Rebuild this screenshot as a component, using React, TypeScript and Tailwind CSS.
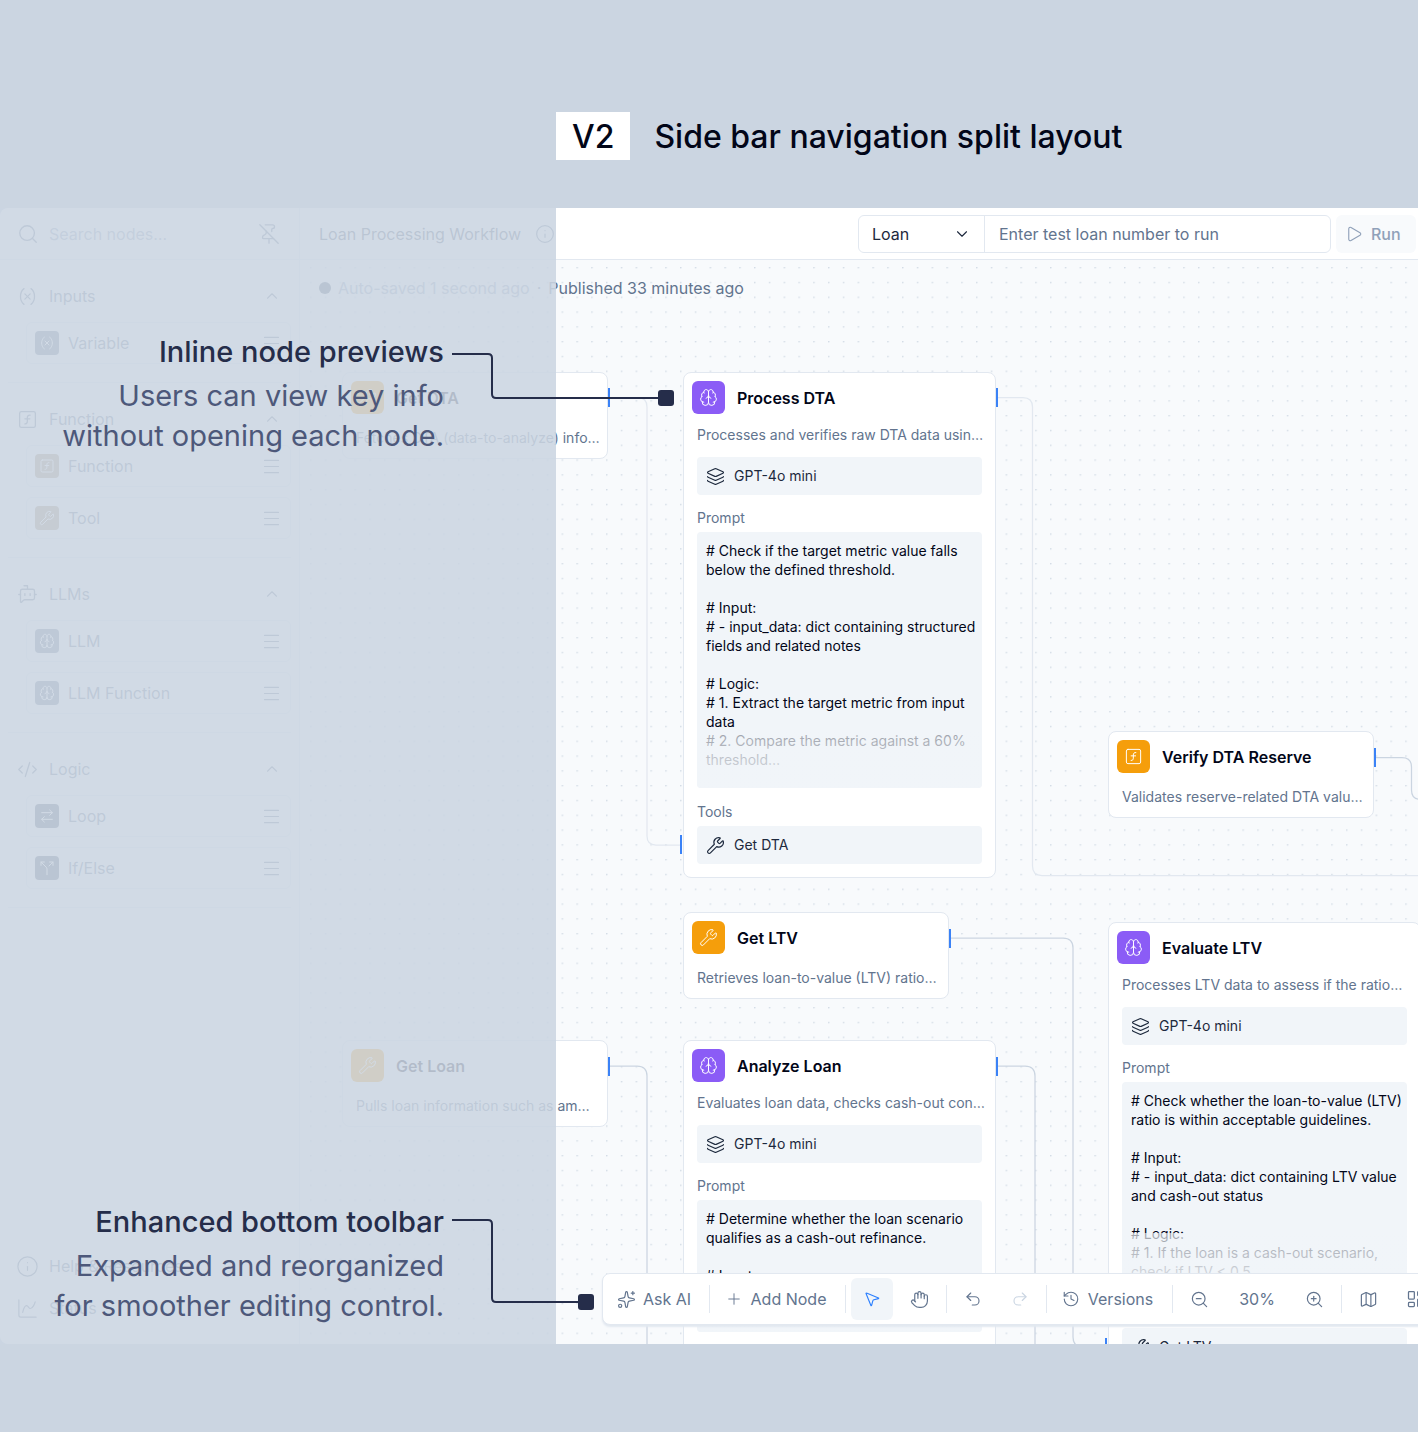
import type { ReactNode } from "react";
import {
  ArrowRightLeft,
  BotMessageSquare,
  Brain,
  ChartSpline,
  ChevronDown,
  ChevronUp,
  CodeXml,
  Hand,
  History,
  Info,
  Layers,
  LayoutDashboard,
  Map as MapIcon,
  Menu,
  MousePointer2,
  PinOff,
  Play,
  Plus,
  Redo2,
  Search,
  Sparkles,
  Split,
  SquareFunction,
  Undo2,
  Variable,
  Wrench,
  ZoomIn,
  ZoomOut,
  type LucideIcon,
} from "lucide-react";
import { clsx } from "clsx";

interface PaletteItem {
  label: string;
  icon: LucideIcon;
  color: string;
}

interface PaletteSection {
  title: string;
  icon: LucideIcon;
  items: PaletteItem[];
}

interface FlowNode {
  id: string;
  title: string;
  description: string;
  kind: "llm" | "tool" | "function";
  place: string;
  prompt?: string;
  promptHeight?: string;
  tool?: string;
}

const SECTIONS: PaletteSection[] = [
  {
    title: "Inputs",
    icon: Variable,
    items: [{ label: "Variable", icon: Variable, color: "bg-slate-500" }],
  },
  {
    title: "Function",
    icon: SquareFunction,
    items: [
      { label: "Function", icon: SquareFunction, color: "bg-[#a08a6c]" },
      { label: "Tool", icon: Wrench, color: "bg-[#a08a6c]" },
    ],
  },
  {
    title: "LLMs",
    icon: BotMessageSquare,
    items: [
      { label: "LLM", icon: Brain, color: "bg-slate-500" },
      { label: "LLM Function", icon: Brain, color: "bg-slate-500" },
    ],
  },
  {
    title: "Logic",
    icon: CodeXml,
    items: [
      { label: "Loop", icon: ArrowRightLeft, color: "bg-slate-600" },
      { label: "If/Else", icon: Split, color: "bg-slate-600" },
    ],
  },
];

const NODES: FlowNode[] = [
  {
    id: "get-dta",
    title: "Get DTA",
    description: "Fetches DTA (data-to-analyze) info…",
    kind: "tool",
    place: "left-[42px] top-[112px] w-[266px]",
  },
  {
    id: "process-dta",
    title: "Process DTA",
    description: "Processes and verifies raw DTA data usin…",
    kind: "llm",
    place: "left-[383px] top-[112px] w-[313px]",
    prompt: `# Check if the target metric value falls
below the defined threshold.

# Input:
# - input_data: dict containing structured
fields and related notes

# Logic:
# 1. Extract the target metric from input
data
# 2. Compare the metric against a 60%
threshold…`,
    promptHeight: "h-[256px]",
    tool: "Get DTA",
  },
  {
    id: "verify-dta",
    title: "Verify DTA Reserve",
    description: "Validates reserve-related DTA valu…",
    kind: "function",
    place: "left-[808px] top-[471px] w-[266px]",
  },
  {
    id: "get-ltv",
    title: "Get LTV",
    description: "Retrieves loan-to-value (LTV) ratio…",
    kind: "tool",
    place: "left-[383px] top-[652px] w-[266px]",
  },
  {
    id: "evaluate-ltv",
    title: "Evaluate LTV",
    description: "Processes LTV data to assess if the ratio…",
    kind: "llm",
    place: "left-[808px] top-[662px] w-[313px]",
    prompt: `# Check whether the loan-to-value (LTV)
ratio is within acceptable guidelines.

# Input:
# - input_data: dict containing LTV value
and cash-out status

# Logic:
# 1. If the loan is a cash-out scenario,
check if LTV < 0.5`,
    promptHeight: "h-[208px]",
    tool: "Get LTV",
  },
  {
    id: "get-loan",
    title: "Get Loan",
    description: "Pulls loan information such as am…",
    kind: "tool",
    place: "left-[42px] top-[780px] w-[266px]",
  },
  {
    id: "analyze-loan",
    title: "Analyze Loan",
    description: "Evaluates loan data, checks cash-out con…",
    kind: "llm",
    place: "left-[383px] top-[780px] w-[313px]",
    prompt: `# Determine whether the loan scenario
qualifies as a cash-out refinance.

# Input:`,
    promptHeight: "h-[132px]",
    tool: "Get Loan",
  },
];

const KIND_STYLE = {
  llm: { icon: Brain, color: "bg-[#8b5cf6]" },
  tool: { icon: Wrench, color: "bg-[#f59e0b]" },
  function: { icon: SquareFunction, color: "bg-[#f59e0b]" },
};

// Connection points, x/y of the top left corner on the canvas
const PORTS = [
  [308, 128],
  [696, 128],
  [380, 575],
  [649, 669],
  [308, 797],
  [696, 797],
  [1074, 488],
  [805, 1078],
];

function PaletteGroup({ section }: { section: PaletteSection }) {
  const Icon = section.icon;
  return (
    <section className="mr-2 ml-2 border-b border-slate-200 pt-4 pb-[18px]">
      <button className="flex h-10 w-full items-center gap-[11px] pr-2.5 pl-[9px] text-left text-slate-500">
        <Icon size={21} strokeWidth={1.5} />
        <span className="flex-1">{section.title}</span>
        <ChevronUp size={18} strokeWidth={1.5} />
      </button>
      <ul className="mt-1.5 flex flex-col gap-2.5 pl-[18px]">
        {section.items.map((item) => (
          <li
            key={item.label}
            className="flex h-[42px] items-center gap-[9px] rounded-md border border-slate-200 pr-2 pl-2"
          >
            <span className={clsx("flex size-6 items-center justify-center rounded text-white", item.color)}>
              <item.icon size={16} strokeWidth={1.5} />
            </span>
            <span className="flex-1 text-slate-500">{item.label}</span>
            <Menu size={21} strokeWidth={1.25} className="text-slate-500" />
          </li>
        ))}
      </ul>
    </section>
  );
}

function Sidebar() {
  return (
    <aside className="flex w-[300px] shrink-0 flex-col border-r border-slate-200 bg-white text-base">
      <label className="flex h-[52px] items-center gap-2.5 border-b border-slate-200 pr-[19px] pl-[17px] text-slate-400">
        <Search size={22} strokeWidth={1.5} className="shrink-0 text-slate-500" />
        <input
          type="text"
          aria-label="Search nodes"
          placeholder="Search nodes…"
          className="min-w-0 flex-1 outline-none placeholder:text-slate-400"
        />
        <PinOff size={22} strokeWidth={1.5} className="shrink-0 text-slate-500" />
      </label>
      {SECTIONS.map((section) => (
        <PaletteGroup key={section.title} section={section} />
      ))}
      <nav className="mt-auto flex flex-col pb-[15px] pl-4 text-slate-500">
        <a href="#help" className="flex h-[42px] items-center gap-2.5">
          <Info size={23} strokeWidth={1.25} />
          Help &amp; Resources
        </a>
        <a href="#status" className="flex h-[42px] items-center gap-2.5">
          <ChartSpline size={23} strokeWidth={1.25} />
          Status
        </a>
      </nav>
    </aside>
  );
}

function Topbar() {
  return (
    <header className="flex h-[52px] shrink-0 items-center border-b border-slate-200 bg-white pr-0.5 pl-[19px] text-base">
      <h2 className="text-slate-600">Loan Processing Workflow</h2>
      <Info size={20} strokeWidth={1.5} className="ml-3.5 text-slate-500" />
      <div className="ml-auto flex h-[38px] w-[473px] rounded-md border border-slate-200">
        <div className="relative w-[126px] border-r border-slate-200">
          <select
            aria-label="Record type"
            className="h-full w-full appearance-none pl-[13px] text-slate-800 outline-none"
          >
            <option>Loan</option>
          </select>
          <ChevronDown
            size={18}
            strokeWidth={1.5}
            className="pointer-events-none absolute top-[9px] right-[13px] text-slate-800"
          />
        </div>
        <input
          type="text"
          aria-label="Test loan number"
          placeholder="Enter test loan number to run"
          className="min-w-0 flex-1 px-3.5 outline-none placeholder:text-slate-500"
        />
      </div>
      <button className="ml-[5px] flex h-[38px] w-20 items-center gap-2 rounded-md bg-slate-50 pl-[9px] font-medium text-slate-400">
        <Play size={18} strokeWidth={1.5} />
        Run
      </button>
    </header>
  );
}

function InfoRow({ icon: Icon, children }: { icon: LucideIcon; children: ReactNode }) {
  return (
    <div className="flex h-[38px] items-center gap-[9px] rounded bg-slate-100 pl-[9px] text-slate-800">
      <Icon size={19} strokeWidth={1.5} />
      {children}
    </div>
  );
}

function NodeCard({ node }: { node: FlowNode }) {
  const { icon: Icon, color } = KIND_STYLE[node.kind];
  const expanded = node.prompt !== undefined;

  return (
    <article
      className={clsx(
        "absolute rounded-lg border border-slate-200 bg-white text-sm leading-5 whitespace-nowrap",
        node.place
      )}
    >
      <header className="flex items-center gap-3 pt-2 pl-2">
        <span className={clsx("flex size-[33px] items-center justify-center rounded-md text-white", color)}>
          <Icon size={19} strokeWidth={1.25} />
        </span>
        <h3 className="text-base font-semibold text-slate-950">{node.title}</h3>
      </header>
      <div className={clsx("px-[13px]", expanded ? "pt-[11px] pb-[13px]" : "pt-3.5 pb-2.5")}>
        <p className="text-slate-500">{node.description}</p>
        {expanded && (
          <>
            <div className="mt-3">
              <InfoRow icon={Layers}>GPT-4o mini</InfoRow>
            </div>
            <h4 className="mt-[13px] text-slate-500">Prompt</h4>
            <div
              className={clsx(
                "relative mt-1 overflow-hidden rounded bg-slate-100 px-[9px] pt-[9px] leading-[19px] whitespace-pre text-slate-950",
                node.promptHeight
              )}
            >
              {node.prompt}
              {/* Fades out the end of a long prompt */}
              <div className="absolute inset-x-0 bottom-0 h-[57px] bg-linear-to-b from-slate-100/65 to-slate-100/95" />
            </div>
            <h4 className="mt-3.5 text-slate-500">Tools</h4>
            <div className="mt-1">
              <InfoRow icon={Wrench}>{node.tool}</InfoRow>
            </div>
          </>
        )}
      </div>
    </article>
  );
}

function Edges() {
  return (
    <svg className="absolute inset-0 h-full w-full" fill="none" aria-hidden="true">
      <defs>
        <pattern id="dots" x="10" y="7" width="14.8" height="14.8" patternUnits="userSpaceOnUse">
          <circle cx="0.8" cy="0.8" r="0.8" fill="#cbd5e1" />
        </pattern>
      </defs>
      <rect width="100%" height="100%" fill="url(#dots)" />
      <g stroke="#e2e8f0" strokeWidth="1.25">
        <path d="M310 137.500H338Q347 137.500 347 147V576Q347 585 356 585H380" />
        <path d="M698 137.500H723Q732.500 137.500 732.500 147V606Q732.500 615.500 742 615.500H1400" />
      </g>
      <g stroke="#cbd5e1" strokeWidth="1.25">
        <path d="M651 678H763Q773 678 773 688V1077Q773 1087 783 1087H805" />
        <path d="M310 806H337Q347 806 347 816V1300" />
        <path d="M698 806H725Q735 806 735 816V1300" />
        <path d="M1075 497.500H1102Q1111.500 497.500 1111.500 507V530Q1111.500 539.500 1121 539.500H1400" />
      </g>
    </svg>
  );
}

function ToolButton({ children, className }: { children: ReactNode; className?: string }) {
  return (
    <button className={clsx("flex h-[42px] shrink-0 items-center justify-center rounded-md", className)}>
      {children}
    </button>
  );
}

function Separator() {
  return <span className="h-7 w-px shrink-0 bg-slate-200" />;
}

function Toolbar() {
  return (
    <div
      role="toolbar"
      className="absolute bottom-[19px] left-[302px] flex h-[52px] w-[900px] items-center rounded-lg border border-slate-200 bg-white text-base text-slate-500 shadow-[0_2px_2px_#e2e8f0]"
    >
      <ToolButton className="w-[106px] gap-[7px] pr-1">
        <Sparkles size={19} strokeWidth={1.5} />
        Ask AI
      </ToolButton>
      <Separator />
      <ToolButton className="w-[135px] gap-2 pr-1">
        <Plus size={18} strokeWidth={1.25} />
        Add Node
      </ToolButton>
      <Separator />
      <ToolButton className="ml-[5px] w-[42px] bg-slate-100 text-blue-500">
        <MousePointer2 size={18} strokeWidth={1.5} />
      </ToolButton>
      <ToolButton className="w-[53px]">
        <Hand size={19} strokeWidth={1.5} />
      </ToolButton>
      <Separator />
      <ToolButton className="w-[51px]">
        <Undo2 size={18} strokeWidth={1.5} />
      </ToolButton>
      <ToolButton className="w-12 pr-1 text-slate-300">
        <Redo2 size={18} strokeWidth={1.5} />
      </ToolButton>
      <Separator />
      <ToolButton className="w-[125px] gap-2 pr-1">
        <History size={18} strokeWidth={1.5} />
        Versions
      </ToolButton>
      <Separator />
      <ToolButton className="w-[53px]">
        <ZoomOut size={19} strokeWidth={1.5} />
      </ToolButton>
      <span className="w-[62px] text-center">30%</span>
      <ToolButton className="w-[53px]">
        <ZoomIn size={19} strokeWidth={1.5} />
      </ToolButton>
      <Separator />
      <ToolButton className="w-[53px]">
        <MapIcon size={19} strokeWidth={1.5} />
      </ToolButton>
      <ToolButton className="w-[42px]">
        <LayoutDashboard size={20} strokeWidth={1.5} />
      </ToolButton>
    </div>
  );
}

function Canvas() {
  return (
    <div className="relative flex-1 overflow-hidden bg-slate-50">
      <Edges />
      <p className="relative flex items-center gap-[7px] pt-4 pl-[19px] text-base text-slate-500">
        <span className="size-3 rounded-full bg-slate-600" />
        <span className="text-slate-400">Auto-saved 1 second ago</span>
        <span>·</span>
        <span>Published 33 minutes ago</span>
      </p>
      {NODES.map((node) => (
        <NodeCard key={node.id} node={node} />
      ))}
      {PORTS.map(([x, y]) => (
        <span
          key={`${x}-${y}`}
          className="absolute h-[19px] w-[2px] bg-[#3b82f6]"
          style={{ left: x, top: y }}
        />
      ))}
      <Toolbar />
    </div>
  );
}

interface CalloutProps {
  title: string;
  lines: string[];
  className: string;
  path: string;
  end: [number, number];
}

function Callout({ title, lines, className, path, end }: CalloutProps) {
  return (
    <div className={clsx("pointer-events-none absolute left-0 flex items-start gap-2", className)}>
      <div className="w-[444px] text-right text-[29px] leading-10 text-[#4d587a]">
        <h2 className="mb-1 font-medium text-[#252d4a]">{title}</h2>
        {lines.map((line) => (
          <p key={line}>{line}</p>
        ))}
      </div>
      <svg width="224" height="112" fill="none" aria-hidden="true">
        <path d={path} stroke="#252d4a" strokeWidth="2" />
        <rect x={end[0]} y={end[1]} width="16" height="16" rx="3" fill="#252d4a" />
      </svg>
    </div>
  );
}

export default function App() {
  return (
    <div className="flex min-h-screen flex-col overflow-hidden bg-[#cbd5e1] pt-28 pb-[88px] font-['Inter','Liberation_Sans',sans-serif]">
      <div className="mb-12 flex items-center gap-6 pl-[556px] text-[32px] leading-[46px] font-medium whitespace-nowrap text-slate-950">
        <span className="bg-white px-4 pt-0.5">V2</span>
        <h1 className="pt-0.5">Side bar navigation split layout</h1>
      </div>

      <div className="relative flex flex-1">
        <div className="flex min-w-0 flex-1 overflow-hidden rounded-l-lg">
          <Sidebar />
          <main className="flex min-w-0 flex-1 flex-col">
            <Topbar />
            <Canvas />
          </main>
        </div>

        {/* Veil over the left part so the callouts stay readable */}
        <div className="pointer-events-none absolute inset-y-0 left-0 w-[556px] bg-[#cbd5e1]/88" />

        <Callout
          title="Inline node previews"
          lines={["Users can view key info", "without opening each node."]}
          className="top-[124px]"
          path="M0 22H36Q40 22 40 26V62Q40 66 44 66H208"
          end={[206, 58]}
        />
        <Callout
          title="Enhanced bottom toolbar"
          lines={["Expanded and reorganized", "for smoother editing control."]}
          className="bottom-[18px]"
          path="M0 18H36Q40 18 40 22V96Q40 100 44 100H128"
          end={[126, 92]}
        />
      </div>
    </div>
  );
}
